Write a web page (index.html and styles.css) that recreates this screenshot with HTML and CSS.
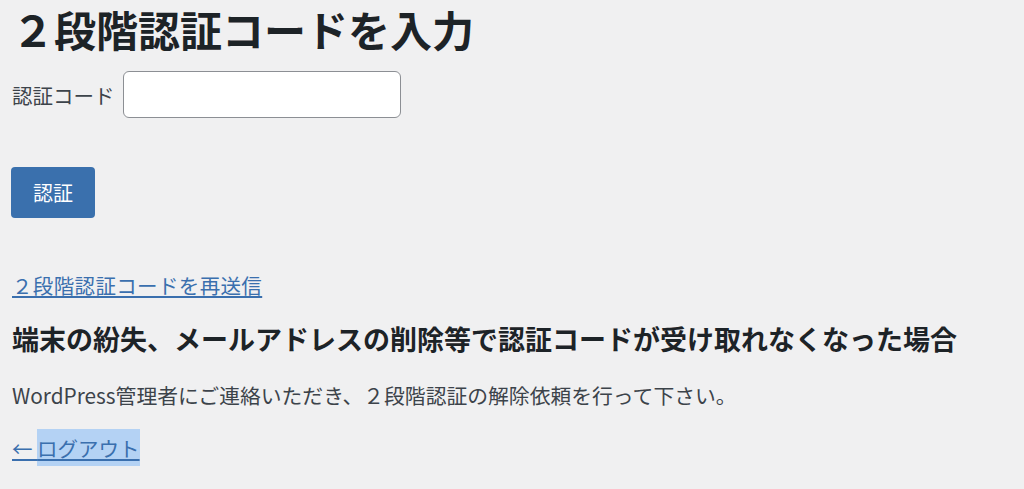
FILE: index.html
```html
<html>
  <head>
    <meta charset="utf-8">
    <link rel="stylesheet" href="styles.css">
  </head>
  <body>
    <h1 class="page-title">２段階認証コードを入力</h1>
    <form class="auth-form">
      <div class="code-row">
        <label for="code" class="code-label">認証コード</label>
        <input type="text" id="code" class="code-input">
      </div>
      <button type="button" class="auth-button">認証</button>
    </form>
    <p class="resend"><a href="#">２段階認証コードを再送信</a></p>
    <h2 class="lost-title">端末の紛失、メールアドレスの削除等で認証コードが受け取れなくなった場合</h2>
    <p class="lost-text">WordPress管理者にご連絡いただき、２段階認証の解除依頼を行って下さい。</p>
    <p class="logout"><a href="#">← <span class="picked">ログアウト</span></a></p>
  </body>
</html>
```

FILE: styles.css
```css
body {
  margin: 0;
  padding: 0 12px;
  background-color: #f0f0f1;
  color: #1d2327;
  font-family: "Noto Sans CJK JP", "Noto Sans", sans-serif;
  font-size: 20.5px;
}
a {
  color: #3a6fae;
}
.page-title {
  margin: 0;
  padding: 0;
  font-size: 42px;
  line-height: 58px;
  font-weight: 700;
}
.code-row {
  display: flex;
  align-items: center;
  gap: 8px;
  margin-top: 13px;
}
.code-label {
  color: #3c434a;
}
.code-input {
  width: 278px;
  height: 47px;
  box-sizing: border-box;
  border: 1.5px solid #8c8f94;
  border-radius: 6px;
  background: #fff;
}
.auth-button {
  margin-top: 49px;
  margin-left: -1px;
  width: 84px;
  height: 51px;
  border: none;
  border-radius: 4px;
  background-color: #3a70ad;
  color: #fff;
  font-family: inherit;
  font-size: 20px;
}
.resend {
  margin: 50px 0 0;
  line-height: 34px;
  letter-spacing: 0.35px;
}
.lost-title {
  margin: 17px 0 0;
  font-size: 27px;
  line-height: 40px;
  font-weight: 700;
}
.lost-text {
  margin: 20px 0 0;
  line-height: 32px;
  font-size: 20.8px;
  color: #3c434a;
}
.logout {
  margin: 21px 0 0;
  line-height: 32px;
}
.picked {
  background-color: #b4d2f4;
  padding: 4px 0 3px;
}
```
